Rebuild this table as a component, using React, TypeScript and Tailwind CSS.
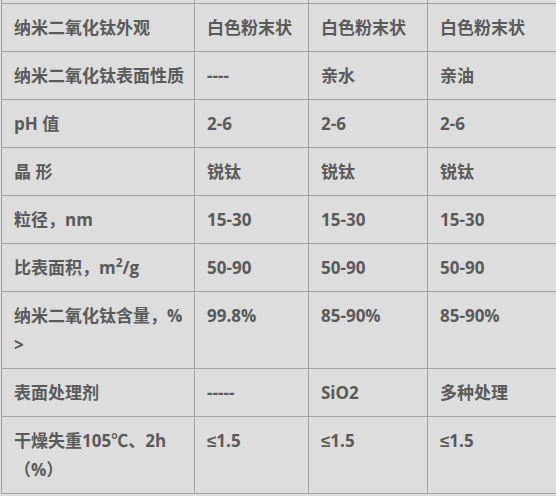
const le = <span style={{ fontFamily: '"Liberation Sans", sans-serif' }}>≤</span>;

const rows: { label: React.ReactNode; values: React.ReactNode[] }[] = [
  { label: "纳米二氧化钛外观", values: ["白色粉末状", "白色粉末状", "白色粉末状"] },
  { label: "纳米二氧化钛表面性质", values: ["----", "亲水", "亲油"] },
  { label: "pH 值", values: ["2-6", "2-6", "2-6"] },
  { label: "晶 形", values: ["锐钛", "锐钛", "锐钛"] },
  { label: "粒径，nm", values: ["15-30", "15-30", "15-30"] },
  {
    label: (
      <>
        比表面积，m<span className="relative -top-[7px] text-[12px] leading-none">2</span>/g
      </>
    ),
    values: ["50-90", "50-90", "50-90"],
  },
  { label: "纳米二氧化钛含量，% >", values: ["99.8%", "85-90%", "85-90%"] },
  { label: "表面处理剂", values: ["-----", "SiO2", "多种处理"] },
  {
    label: "干燥失重105℃、2h （%）",
    values: [<>{le}1.5</>, <>{le}1.5</>, <>{le}1.5</>],
  },
];

const cell =
  "border border-[#a3a3a3] align-top pl-[12px] pr-[6px] py-[9px] leading-[29px]";

export default function App() {
  return (
    <div className="w-[556px] h-[496px] overflow-hidden bg-[#dddddd]">
      <table
        className="ml-[1px] w-[600px] table-fixed border-collapse text-[17px] font-bold text-[#5a5a5a]"
        style={{ fontFamily: '"Open Sans", "Noto Sans CJK SC", sans-serif' }}
      >
        <colgroup>
          <col className="w-[193px]" />
          <col className="w-[114px]" />
          <col className="w-[119px]" />
          <col />
        </colgroup>
        <tbody>
          <tr className="h-[3px]">
            <td className="border border-t-0 border-[#a3a3a3] p-0" />
            <td className="border border-t-0 border-[#a3a3a3] p-0" />
            <td className="border border-t-0 border-[#a3a3a3] p-0" />
            <td className="border border-t-0 border-[#a3a3a3] p-0" />
          </tr>
          {rows.map((r, i) => (
            <tr key={i}>
              <td className={cell}>{r.label}</td>
              {r.values.map((v, j) => (
                <td key={j} className={cell}>
                  {v}
                </td>
              ))}
            </tr>
          ))}
        </tbody>
      </table>
    </div>
  );
}
